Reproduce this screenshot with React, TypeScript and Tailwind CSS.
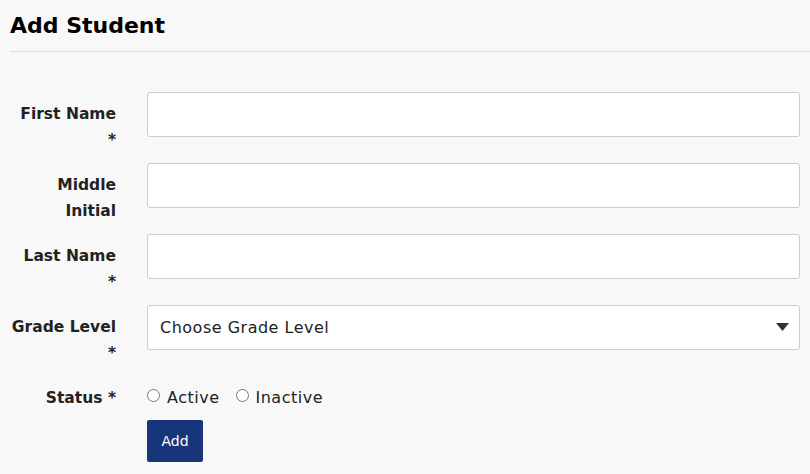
import { useState } from 'react';

const font = { fontFamily: '"DejaVu Sans", "Noto Sans", sans-serif' };

function Row({ label, children }: { label: React.ReactNode; children: React.ReactNode }) {
  return (
    <div className="grid grid-cols-[106px_1fr] items-start gap-x-[31px]">
      <label className="h-[44px] overflow-visible pt-[9px] text-right text-[15.5px] font-bold leading-[26px] text-[#222]">{label}</label>
      <div>{children}</div>
    </div>
  );
}

export default function App() {
  const [status, setStatus] = useState('');
  const inputCls =
    'block h-[45px] w-full rounded-[3px] border border-[#ccc] bg-white px-3 text-[16px] tracking-[0.5px] text-[#222] outline-none';

  return (
    <div className="h-[474px] overflow-hidden bg-[#f8f8f8] pl-[10px] pr-[10px]" style={font}>
      <h1 className="pt-[10px] pb-[10px] text-[22px] font-bold leading-[31px] text-black border-b border-[#dedede] -mr-[10px]">
        Add Student
      </h1>
      <form className="mt-[40px] flex flex-col gap-[26px]" onSubmit={(e) => e.preventDefault()}>
        <Row label={<>First Name<br />*</>}>
          <input className={inputCls} />
        </Row>
        <Row label={<>Middle<br />Initial</>}>
          <input className={inputCls} />
        </Row>
        <Row label={<>Last Name<br />*</>}>
          <input className={inputCls} />
        </Row>
        <Row label={<>Grade Level<br />*</>}>
          <div className="relative">
            <select className={inputCls + ' appearance-none'} defaultValue="">
              <option value="">Choose Grade Level</option>
              <option>9</option>
              <option>10</option>
              <option>11</option>
              <option>12</option>
            </select>
            <svg className="pointer-events-none absolute right-[11px] top-[18px]" width="13" height="8" viewBox="0 0 13 8">
              <path d="M0 0h13L6.5 8z" fill="#333" />
            </svg>
          </div>
        </Row>
        <Row label="Status *">
          <div className="flex items-center pt-[9px] text-[16px] tracking-[0.5px] leading-[26px] text-[#222]">
            <label className="flex items-center">
              <input
                type="radio"
                name="status"
                checked={status === 'active'}
                onChange={() => setStatus('active')}
                className="m-0 h-[13px] w-[13px] -translate-y-[3px]"
              />
              <span className="ml-[7px]">Active</span>
            </label>
            <label className="ml-[16px] flex items-center">
              <input
                type="radio"
                name="status"
                checked={status === 'inactive'}
                onChange={() => setStatus('inactive')}
                className="m-0 h-[13px] w-[13px] -translate-y-[3px]"
              />
              <span className="ml-[7px]">Inactive</span>
            </label>
          </div>
          <button
            type="submit"
            className="mt-[9px] h-[42px] w-[56px] rounded-[2px] bg-[#17367a] text-[14px] text-white"
          >
            Add
          </button>
        </Row>
      </form>
    </div>
  );
}
